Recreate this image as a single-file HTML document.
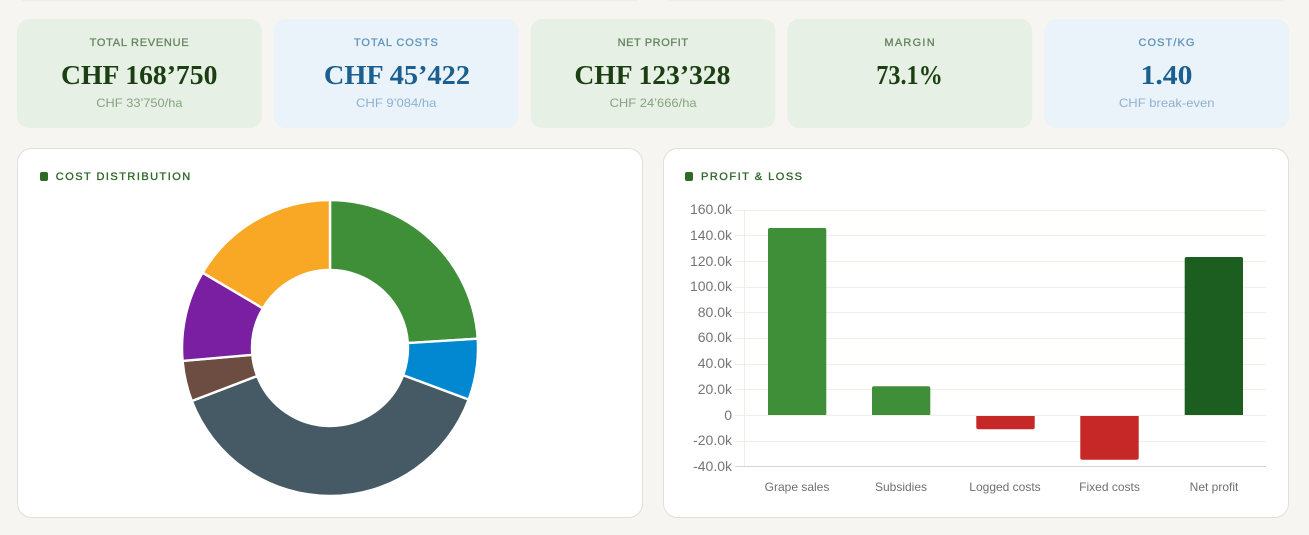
<!DOCTYPE html>
<html lang="en"><head><meta charset="utf-8"><title>Dashboard</title>
<style>
html,body{margin:0;padding:0;background:#f6f5f1;width:1309px;height:535px;overflow:hidden}
svg{display:block}
.l{font:11px "Liberation Sans",sans-serif;stroke-width:.3px}
.v{font:bold 27.5px "Liberation Serif",serif}
.s{font:12px "Liberation Sans",sans-serif}
.t{font:11px "Liberation Sans",sans-serif;fill:#2d6a27;stroke:#2d6a27;stroke-width:.35px}
.y{font:14px "Liberation Sans",sans-serif;fill:#757575;text-anchor:end}
.x{font:12px "Liberation Sans",sans-serif;fill:#6f6f6f;text-anchor:middle}
.gl{fill:#668461;stroke:#668461}.bl{fill:#5f94bb;stroke:#5f94bb}
.gv{fill:#1b3f12}.bv{fill:#1b5f8f}
.gs{fill:#86a381}.bs{fill:#8db2d0}
.g{stroke:#efeee8;stroke-width:1;fill:none}
</style></head><body>
<svg width="1309" height="535" viewBox="0 0 1309 535" xmlns="http://www.w3.org/2000/svg">
<defs><linearGradient id="sh" x1="0" y1="0" x2="0" y2="1"><stop offset="0" stop-color="#ecebe6"/><stop offset="1" stop-color="#f6f5f1"/></linearGradient></defs>
<rect x="22" y="0" width="616" height="2" fill="url(#sh)"/>
<rect x="668" y="0" width="616" height="2" fill="url(#sh)"/>

<rect x="17" y="19" width="244.8" height="109" rx="12" fill="#e6f0e4"/>
<rect x="273.8" y="19" width="244.8" height="109" rx="12" fill="#eaf2fa"/>
<rect x="530.6" y="19" width="244.8" height="109" rx="12" fill="#e6f0e4"/>
<rect x="787.4" y="19" width="244.8" height="109" rx="12" fill="#e6f0e4"/>
<rect x="1044.2" y="19" width="244.8" height="109" rx="12" fill="#eaf2fa"/>

<text class="l gl" x="89.6" y="46" textLength="99" lengthAdjust="spacing">TOTAL REVENUE</text>
<text class="v gv" x="61" y="84" textLength="156.4" lengthAdjust="spacingAndGlyphs">CHF 168’750</text>
<text class="s gs" x="96.3" y="107" textLength="86.2" lengthAdjust="spacingAndGlyphs">CHF 33’750/ha</text>

<text class="l bl" x="354" y="46" textLength="83.8" lengthAdjust="spacing">TOTAL COSTS</text>
<text class="v bv" x="323.9" y="84" textLength="146.1" lengthAdjust="spacingAndGlyphs">CHF 45’422</text>
<text class="s bs" x="356" y="107" textLength="80.4" lengthAdjust="spacingAndGlyphs">CHF 9’084/ha</text>

<text class="l gl" x="617.6" y="46" textLength="70.4" lengthAdjust="spacing">NET PROFIT</text>
<text class="v gv" x="574.4" y="84" textLength="156" lengthAdjust="spacingAndGlyphs">CHF 123’328</text>
<text class="s gs" x="609.6" y="107" textLength="87" lengthAdjust="spacingAndGlyphs">CHF 24’666/ha</text>

<text class="l gl" x="884.4" y="46" textLength="50.3" lengthAdjust="spacing">MARGIN</text>
<text class="v gv" x="876.3" y="84" textLength="66.5" lengthAdjust="spacingAndGlyphs">73.1%</text>

<text class="l bl" x="1138.5" y="46" textLength="55.9" lengthAdjust="spacing">COST/KG</text>
<text class="v bv" x="1140.5" y="84" textLength="51.9" lengthAdjust="spacingAndGlyphs">1.40</text>
<text class="s bs" x="1118.9" y="107" textLength="95.6" lengthAdjust="spacingAndGlyphs">CHF break-even</text>

<rect x="17.5" y="148.5" width="625" height="369" rx="14" fill="#fff" stroke="#e2dfd8"/>
<rect x="663.5" y="148.5" width="625" height="369" rx="14" fill="#fff" stroke="#e2dfd8"/>

<rect x="40" y="172" width="8" height="9" rx="2" fill="#2e6b26"/>
<text class="t" x="55.8" y="180" textLength="134.4" lengthAdjust="spacing">COST DISTRIBUTION</text>
<rect x="685" y="172" width="8" height="9" rx="2" fill="#2e6b26"/>
<text class="t" x="701" y="180" textLength="101" lengthAdjust="spacing">PROFIT &amp; LOSS</text>

<g stroke="#fff" stroke-width="2.4" stroke-linejoin="round">
<path fill="#3f8f38" d="M330 200A148 148 0 0 1 477.7 338.7L407.8 343.1A78 78 0 0 0 330 270Z"/>
<path fill="#0288d1" d="M477.7 338.7A148 148 0 0 1 468.7 399.6L403.1 375.2A78 78 0 0 0 407.8 343.1Z"/>
<path fill="#455a64" d="M468.7 399.6A148 148 0 0 1 191.8 401L257.2 376A78 78 0 0 0 403.1 375.2Z"/>
<path fill="#6d4c41" d="M191.8 401A148 148 0 0 1 182.6 360.9L252.3 354.8A78 78 0 0 0 257.2 376Z"/>
<path fill="#7b1fa2" d="M182.6 360.9A148 148 0 0 1 202.6 272.7L262.9 308.3A78 78 0 0 0 252.3 354.8Z"/>
<path fill="#f9a825" d="M202.6 272.7A148 148 0 0 1 330 200L330 270A78 78 0 0 0 262.9 308.3Z"/>
</g>

<path class="g" d="M735 210.5H1266M735 235.5H1266M735 261.5H1266M735 287.5H1266M735 312.5H1266M735 338.5H1266M735 364.5H1266M735 389.5H1266M735 415.5H1266M735 441.5H1266M744.5 210V467"/>
<path d="M735 466.5H1266" stroke="#d6d4cd" fill="none"/>

<g>
<text class="y" x="732" y="214">160.0k</text>
<text class="y" x="732" y="240">140.0k</text>
<text class="y" x="732" y="266">120.0k</text>
<text class="y" x="732" y="291">100.0k</text>
<text class="y" x="732" y="317">80.0k</text>
<text class="y" x="732" y="342">60.0k</text>
<text class="y" x="732" y="368">40.0k</text>
<text class="y" x="732" y="394">20.0k</text>
<text class="y" x="732" y="420">0</text>
<text class="y" x="732" y="445">-20.0k</text>
<text class="y" x="732" y="471">-40.0k</text>
</g>

<path fill="#3f8f38" d="M768 415V230a2 2 0 0 1 2-2H824.3a2 2 0 0 1 2 2V415Z"/>
<path fill="#3f8f38" d="M872 415V388.3a2 2 0 0 1 2-2H928.3a2 2 0 0 1 2 2V415Z"/>
<path fill="#c62828" d="M976.3 416H1034.7V427.3a2 2 0 0 1-2 2H978.3a2 2 0 0 1-2-2Z"/>
<path fill="#c62828" d="M1080.3 416H1138.7V457.7a2 2 0 0 1-2 2H1082.3a2 2 0 0 1-2-2Z"/>
<path fill="#1b5e20" d="M1184.7 415V259a2 2 0 0 1 2-2H1241a2 2 0 0 1 2 2V415Z"/>

<text class="x" x="797" y="491">Grape sales</text>
<text class="x" x="901" y="491">Subsidies</text>
<text class="x" x="1005" y="491">Logged costs</text>
<text class="x" x="1109.5" y="491">Fixed costs</text>
<text class="x" x="1214" y="491">Net profit</text>
</svg>
</body></html>
